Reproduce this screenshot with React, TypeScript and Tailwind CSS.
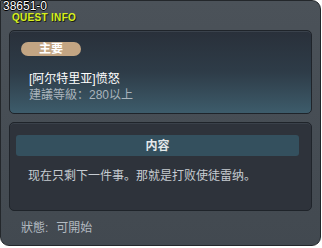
import React from 'react';

const cjk = "font-['Liberation_Sans','Noto_Sans_CJK_SC',sans-serif]";

const QuestInfo = () => {
  return (
    <div className="w-[322px] h-[248px] bg-white">
      <div className="relative w-[321px] h-[246px] rounded-tr-[9px] rounded-b-[9px] border border-[#23272b] bg-gradient-to-b from-[#4b5259] to-[#424950]">
        {/* id label */}
        <span className="absolute left-[2px] top-[0px] text-[12px] leading-[10px] text-white font-['Liberation_Sans',sans-serif] [text-shadow:1px_0_0_#000,-1px_0_0_#000,0_1px_0_#000,0_-1px_0_#000]">
          38651-0
        </span>

        <div className="h-[29px] pl-[11px] pt-[12px]">
          <p className="text-[10px] leading-[10px] font-bold tracking-[0.3px] text-[#d6f01e] font-['Liberation_Sans',sans-serif] [text-shadow:1px_1px_0_#1b1e10]">
            QUEST INFO
          </p>
        </div>

        {/* 퀘스트 제목 */}
        <div className="ml-[8px] w-[303px] h-[84px] rounded-[5px] border border-[#1f242a] bg-gradient-to-b from-[#29303a] via-[#2e3c48] to-[#3d5c6b] shadow-[inset_0_1px_0_#3a424c] pl-[11px] pt-[11px]">
          <div className={`w-[60px] h-[14px] rounded-full bg-[#c3a583] flex items-center justify-center text-[12px] font-bold text-white ${cjk}`}>
            主要
          </div>
          <div className="pl-[8px]">
            <p className={`mt-[15px] text-[12px] leading-[16px] text-white ${cjk}`}>[阿尔特里亚]愤怒</p>
            <p className={`text-[12px] leading-[16px] text-[#aab4bc] ${cjk}`}>建議等級：280以上</p>
          </div>
        </div>

        {/* 내용 */}
        <div className="ml-[8px] mt-[8px] w-[303px] h-[89px] rounded-[5px] border border-[#1f242a] bg-[#2e333b] shadow-[inset_0_1px_0_#3a414a] pl-[6px] pt-[12px]">
          <div className={`w-[283px] h-[21px] rounded-[3px] bg-[#34505e] flex items-center justify-center text-[12px] font-bold text-[#e4e8ea] ${cjk}`}>
            内容
          </div>
          <p className={`mt-[12px] pl-[12px] text-[12px] leading-[16px] text-[#c6ccd1] ${cjk}`}>
            现在只剩下一件事。那就是打败使徒雷纳。
          </p>
        </div>

        <p className={`mt-[9px] pl-[20px] text-[12px] leading-[16px] text-[#b3bac1] ${cjk}`}>
          狀態:<span className="ml-[8px]">可開始</span>
        </p>
      </div>
    </div>
  );
};

export default QuestInfo;
